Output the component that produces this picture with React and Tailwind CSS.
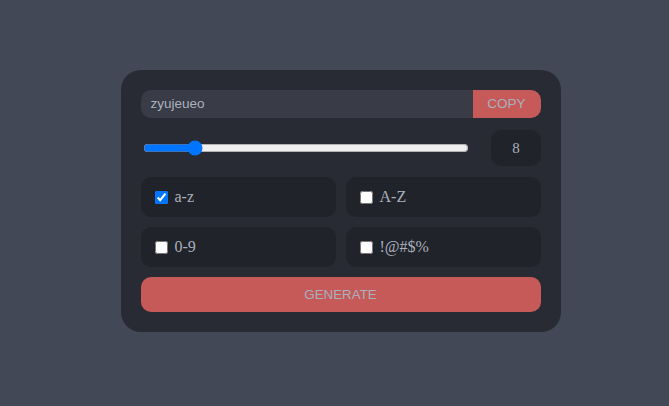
import React, { useState } from "react";

function Option({ label, checked }) {
  const [c, setC] = useState(checked);
  return (
    <label className="flex items-center h-[40px] rounded-[10px] bg-[#21232a] pl-[14px] gap-[7px]">
      <input type="checkbox" checked={c} onChange={() => setC(!c)} className="m-0 w-[13px] h-[13px] accent-[#0075ff]" />
      <span className="text-[16px] text-[#aab0bd]" style={{ fontFamily: '"Liberation Serif", serif' }}>{label}</span>
    </label>
  );
}

export default function App() {
  const [len, setLen] = useState(8);
  return (
    <div className="min-h-[406px] w-full bg-[#434856] flex items-center justify-center pl-[12px] pb-[4px]" style={{ fontFamily: '"Liberation Sans", Arial, sans-serif' }}>
      <div className="w-[440px] rounded-[20px] bg-[#282b33] p-[20px] flex flex-col">
        <div className="flex h-[28px]">
          <div className="flex-1 bg-[#393c47] rounded-l-[10px] flex items-center pl-[10px] text-[13.5px] text-[#aab0bd]">zyujeueo</div>
          <button className="w-[68px] bg-[#c55a58] rounded-r-[10px] text-[13.5px] text-[#aab0bd]">COPY</button>
        </div>
        <div className="flex items-center justify-between h-[36px] mt-[12px]">
          <input type="range" min="4" max="32" value={len} onChange={(e) => setLen(e.target.value)} className="ml-[2px] w-[326px] accent-[#0075ff]" />
          <div className="w-[50px] h-[36px] rounded-[10px] bg-[#21232a] flex items-center justify-center pl-[1px] text-[15px] text-[#aab0bd]" style={{ fontFamily: '"Liberation Serif", serif' }}>{len}</div>
        </div>
        <div className="grid grid-cols-2 gap-[10px] mt-[11px]">
          <Option label="a-z" checked={true} />
          <Option label="A-Z" checked={false} />
          <Option label="0-9" checked={false} />
          <Option label="!@#$%" checked={false} />
        </div>
        <button className="mt-[10px] h-[35px] rounded-[10px] bg-[#c55a58] text-[13.33px] text-[#aab0bd]">GENERATE</button>
      </div>
    </div>
  );
}
